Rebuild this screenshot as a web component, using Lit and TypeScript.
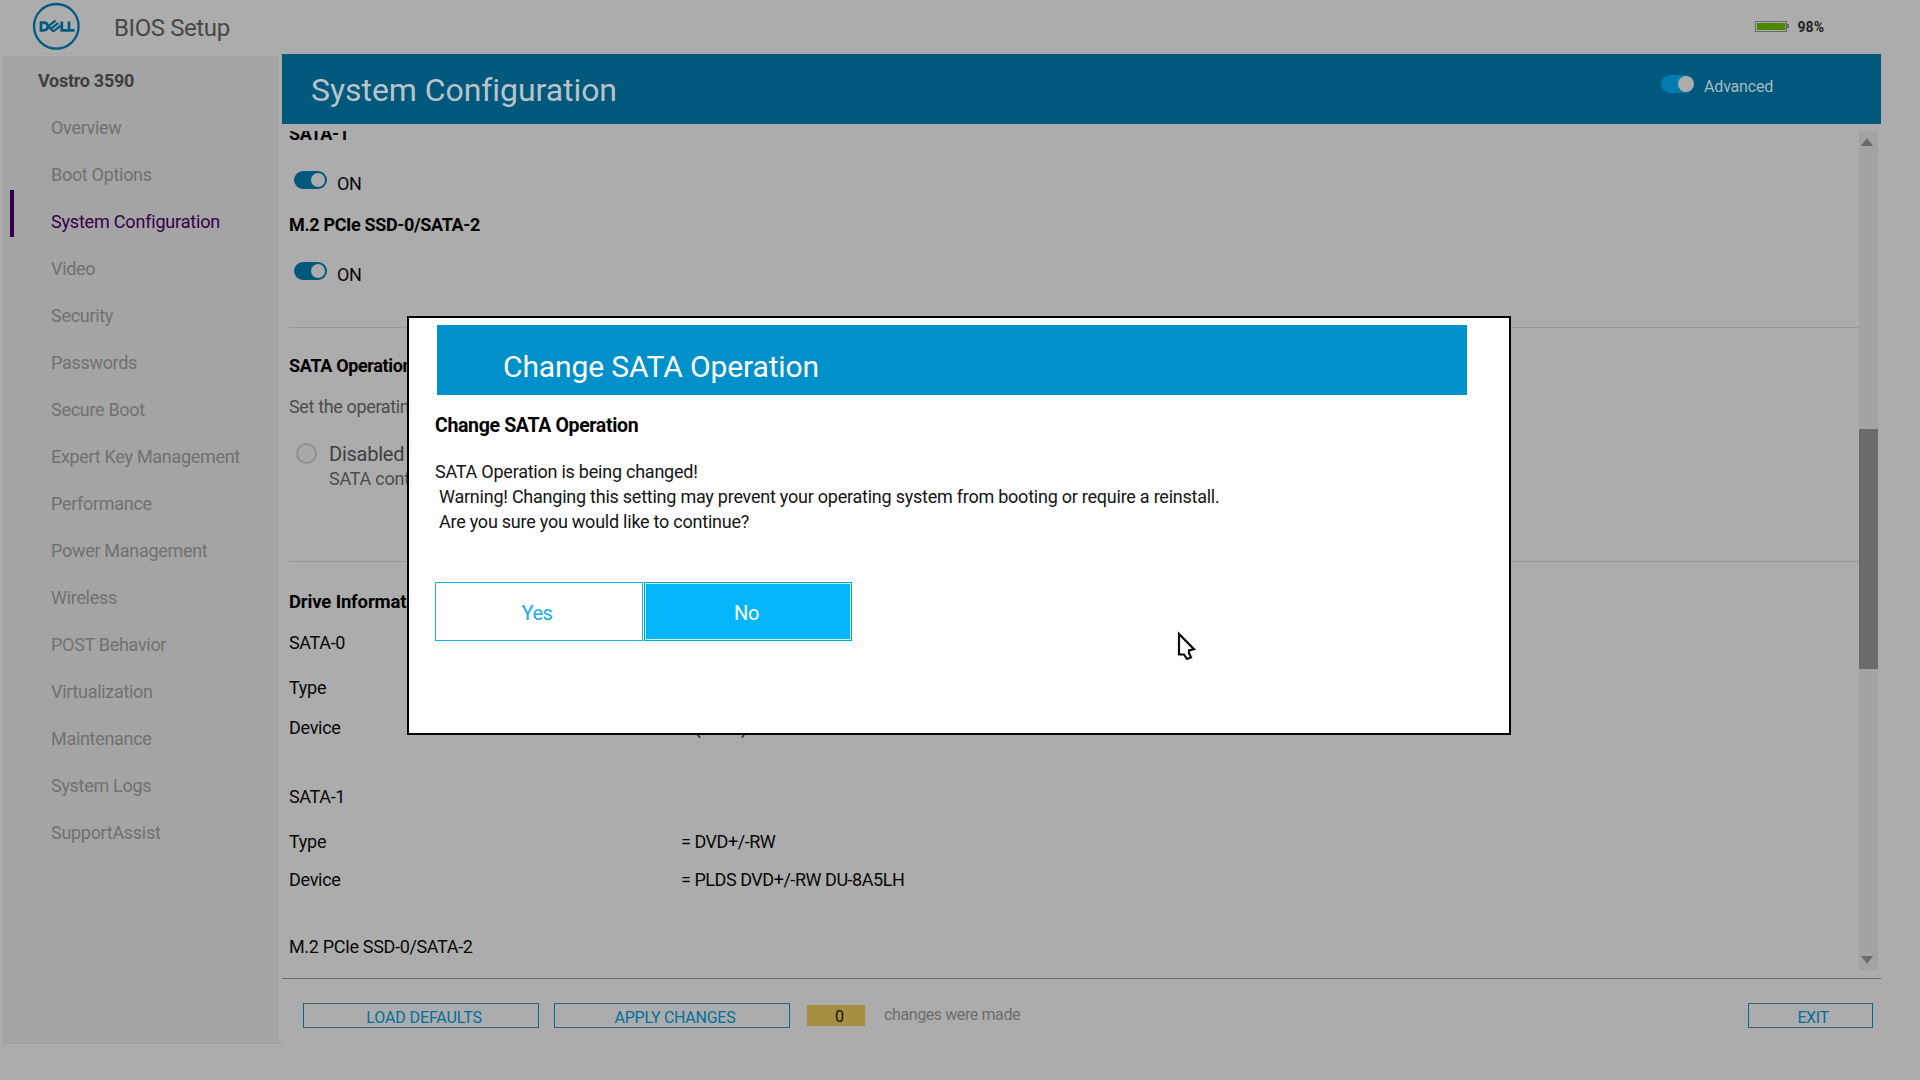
import { LitElement, html, css } from "lit";
import { customElement, property } from "lit/decorators.js";
import { classMap } from "lit/directives/class-map.js";

const NAV = [
  "Overview",
  "Boot Options",
  "System Configuration",
  "Video",
  "Security",
  "Passwords",
  "Secure Boot",
  "Expert Key Management",
  "Performance",
  "Power Management",
  "Wireless",
  "POST Behavior",
  "Virtualization",
  "Maintenance",
  "System Logs",
  "SupportAssist",
];

@customElement("bios-toggle")
export class BiosToggle extends LitElement {
  static styles = css`
    :host { display: flex; }
    .track {
      display: flex;
      justify-content: flex-end;
      align-items: center;
      box-sizing: border-box;
      width: 33px;
      height: 18px;
      border-radius: 9px;
      padding-right: 2px;
      background: #00587c;
    }
    .knob { width: 14px; height: 14px; border-radius: 50%; background: #acacac; }
    .light { background: #007cae; padding-right: 0; }
    .light .knob { width: 16px; height: 16px; }
  `;
  @property() tone = "dark";
  render() {
    return html`<div class=${classMap({ track: true, light: this.tone === "light" })}>
      <div class="knob"></div>
    </div>`;
  }
}

@customElement("bios-header")
export class BiosHeader extends LitElement {
  static styles = css`
    :host {
      display: flex;
      align-items: flex-start;
      height: 54px;
      box-sizing: border-box;
      padding: 2px 0 0 32px;
    }
    .logo { width: 48px; height: 48px; }
    .title { margin-left: 34px; margin-top: 10px; font-size: 24px; line-height: 32px; letter-spacing: -0.4px; color: #474747; }
    .battery { display: flex; align-items: center; margin-left: auto; margin-top: 16px; padding-right: 96px; }
    .battery svg { width: 34px; height: 11px; margin-top: -1px; }
    .percent { margin-left: 9px; font-size: 14px; line-height: 18px; font-weight: 700; color: #222; }
  `;
  render() {
    return html`
      <svg class="logo" viewBox="0 0 48 48" role="img" aria-label="Dell">
        <circle cx="24.3" cy="24.3" r="22.3" fill="none" stroke="#005b80" stroke-width="2.3" />
        <g fill="none" stroke="#005b80" stroke-width="2.7">
          <path d="M9 20.7V28.3H11.4C14.2 28.3 15.7 26.7 15.7 24.5S14.2 20.7 11.4 20.7Z" />
          <path d="M29.8 19.5V28.3H35.6M37 19.5V28.3H42.6" />
          <g stroke-width="2.2">
            <path d="M16 24.4L23.6 18.6M18.6 26.9L26.2 21.1M21.2 29.5L28.8 23.7" />
            <path d="M16 24L21.6 29.6" />
          </g>
        </g>
      </svg>
      <div class="title">BIOS Setup</div>
      <div class="battery">
        <svg viewBox="0 0 34 11">
          <rect x="0.5" y="0.5" width="31" height="10" fill="none" stroke="#696969" />
          <rect x="2" y="2" width="28.5" height="7" fill="#4c8700" />
          <rect x="32" y="3" width="2" height="4" fill="#696969" />
        </svg>
        <div class="percent">98%</div>
      </div>
    `;
  }
}

@customElement("bios-nav")
export class BiosNav extends LitElement {
  static styles = css`
    :host {
      display: block;
      box-sizing: border-box;
      width: 277px;
      height: 988px;
      margin: 2px 0 0 2px;
      background: #a4a4a4;
      box-shadow: 0 0 0 2px #adadad, 0 0 0 3px #a7a7a7;
    }
    .model { padding: 13px 0 0 36px; font-size: 18px; line-height: 24px; font-weight: 700; letter-spacing: -0.28px; color: #3f3f3f; }
    .items { display: flex; flex-direction: column; margin-top: 3px; padding-left: 8px; }
    .item {
      display: flex;
      height: 47px;
      box-sizing: border-box;
      padding: 20px 0 0 37px;
      border-left: 4px solid transparent;
      font-size: 18px;
      line-height: 24px;
      letter-spacing: -0.3px;
      white-space: nowrap;
      color: #717171;
    }
    .active { border-left-color: #34004a; color: #34004a; letter-spacing: -0.19px; }
  `;
  render() {
    return html`
      <div class="model">Vostro 3590</div>
      <div class="items">
        ${NAV.map((n) => html`<div class=${classMap({ item: true, active: n === "System Configuration" })}>${n}</div>`)}
      </div>
    `;
  }
}

@customElement("bios-settings")
export class BiosSettings extends LitElement {
  static styles = css`
    :host { display: flex; height: 839px; padding-top: 7px; }
    .view { width: 1577px; height: 839px; overflow: hidden; box-sizing: border-box; padding-left: 7px; color: #080808; }
    .view > div { font-size: 18px; line-height: 24px; letter-spacing: -0.35px; white-space: nowrap; }
    .view > .head { font-weight: 700; color: #000; }
    .first { margin-top: -9px; }
    .second { margin-top: 17px; }
    .switch { display: flex; height: 25px; margin-top: 25px; padding-left: 5px; gap: 10px; }
    .switch span { margin-top: 1px; }
    .rule { height: 1px; background: #989898; }
    .rule-a { margin-top: 40px; }
    .rule-b { margin-top: 70px; }
    .operation { margin-top: 26px; }
    .note { margin-top: 17px; color: #4c4c4c; }
    .radio { display: flex; gap: 12px; margin-top: 23px; padding-left: 7px; color: #4c4c4c; }
    .ring {
      box-sizing: border-box;
      width: 21px;
      height: 21px;
      margin-top: 1px;
      border: 2px solid #929292;
      border-radius: 50%;
      background: #a9a9a9;
    }
    .choice { font-size: 20px; letter-spacing: -0.25px; color: #404040; }
    .hint { margin-top: 1px; letter-spacing: -0.25px; }
    .view > .drives { margin-top: 28px; font-size: 18.5px; letter-spacing: -0.15px; }
    .drive-a { margin-top: 17px; }
    .drive-b { margin-top: 45px; }
    .drive-c { margin-top: 43px; }
    .pair { display: grid; grid-template-columns: 392px auto; justify-content: start; }
    .type-a { margin-top: 21px; }
    .device-a { margin-top: 16px; }
    .device-b { margin-top: 14px; }
    .view > .pair { letter-spacing: -0.28px; }
    .val { letter-spacing: -0.46px; }
    .bar { display: flex; flex-direction: column; align-items: center; width: 19px; height: 839px; background: #a3a3a3; }
    .arrow { width: 0; height: 0; margin-right: 3px; border: 6px solid transparent; }
    .up { border-top: 0; border-bottom: 8px solid #6b6b6b; margin-top: 7px; }
    .down { border-bottom: 0; border-top: 8px solid #6b6b6b; margin-top: auto; margin-bottom: 6px; }
    .thumb { width: 19px; height: 240px; margin-top: 283px; background: #6b6b6b; }
  `;
  render() {
    return html`
      <div class="view">
        <div class="head first">SATA-1</div>
        <div class="switch"><bios-toggle></bios-toggle><span>ON</span></div>
        <div class="head second">M.2 PCIe SSD-0/SATA-2</div>
        <div class="switch"><bios-toggle></bios-toggle><span>ON</span></div>
        <div class="rule rule-a"></div>
        <div class="head operation">SATA Operation</div>
        <div class="note">Set the operating</div>
        <div class="radio">
          <div class="ring"></div>
          <div>
            <div class="choice">Disabled</div>
            <div class="hint">SATA contr</div>
          </div>
        </div>
        <div class="rule rule-b"></div>
        <div class="head drives">Drive Information</div>
        <div class="drive-a">SATA-0</div>
        <div class="pair type-a"><span>Type</span></div>
        <div class="pair device-a"><span>Device</span><span class="val">= (None)</span></div>
        <div class="drive-b">SATA-1</div>
        <div class="pair type-a"><span>Type</span><span class="val">= DVD+/-RW</span></div>
        <div class="pair device-b"><span>Device</span><span class="val">= PLDS DVD+/-RW DU-8A5LH</span></div>
        <div class="drive-c">M.2 PCIe SSD-0/SATA-2</div>
      </div>
      <div class="bar">
        <div class="arrow up"></div>
        <div class="thumb"></div>
        <div class="arrow down"></div>
      </div>
    `;
  }
}

@customElement("bios-footer")
export class BiosFooter extends LitElement {
  static styles = css`
    :host {
      display: flex;
      box-sizing: border-box;
      height: 102px;
      margin-top: 8px;
      padding: 24px 8px 0 21px;
      border-top: 1px solid #6a6a6a;
      font-size: 16px;
      line-height: 24px;
      letter-spacing: -0.15px;
    }
    .btn {
      display: flex;
      justify-content: center;
      box-sizing: border-box;
      width: 236px;
      height: 25px;
      margin-right: 15px;
      padding: 2px 0 0 6px;
      border: 1px solid #44606c;
      border-left-color: #006a94;
      border-right-color: #006a94;
      color: #006f9c;
    }
    .apply { letter-spacing: -0.27px; margin-right: 17px; }
    .load { letter-spacing: -0.1px; }
    .exit { width: 125px; margin: 0 0 0 auto; padding-left: 5px; letter-spacing: -0.4px; }
    .count { display: flex; justify-content: center; width: 58px; height: 21px; margin-top: 2px; padding-left: 7px; box-sizing: border-box; line-height: 23px; background: #a88e41; color: #111; }
    .made { margin: 0 0 0 19px; letter-spacing: -0.4px; color: #6d6d6d; }
  `;
  render() {
    return html`
      <div class="btn load">LOAD DEFAULTS</div>
      <div class="btn apply">APPLY CHANGES</div>
      <div class="count">0</div>
      <div class="made">changes were made</div>
      <div class="btn exit">EXIT</div>
    `;
  }
}

@customElement("bios-dialog")
export class BiosDialog extends LitElement {
  static styles = css`
    :host {
      display: block;
      box-sizing: border-box;
      width: 1104px;
      height: 419px;
      padding: 7px 26px 0;
      border: 2px solid #000;
      background: #fff;
      color: #141414;
    }
    .banner { width: 1030px; height: 70px; box-sizing: border-box; margin-left: 2px; padding: 22px 0 0 66px; background: #0090ca; color: #fff; font-size: 30px; line-height: 40px; letter-spacing: -0.12px; }
    .sub { margin-top: 18px; font-size: 19.5px; line-height: 26px; font-weight: 700; letter-spacing: -0.34px; color: #000; }
    .text { margin-top: 20px; font-size: 18px; line-height: 25px; letter-spacing: -0.24px; white-space: nowrap; }
    .text div + div { padding-left: 4px; }
    .buttons { display: flex; gap: 1px; margin-top: 48px; }
    .btn {
      display: flex;
      justify-content: center;
      box-sizing: border-box;
      width: 208px;
      height: 59px;
      padding: 17px 4px 0 0;
      border: 1px solid #0fb4f0;
      font-size: 20px;
      line-height: 26px;
      letter-spacing: -0.4px;
      color: #15aee6;
    }
    .primary { padding-right: 3px; border-color: #00a9c4; background: #04b5fa; box-shadow: inset 0 0 0 1px #c9fbff; color: #fff; }
  `;
  render() {
    return html`
      <div class="banner">Change SATA Operation</div>
      <div class="sub">Change SATA Operation</div>
      <div class="text">
        <div>SATA Operation is being changed!</div>
        <div>Warning! Changing this setting may prevent your operating system from booting or require a reinstall.</div>
        <div>Are you sure you would like to continue?</div>
      </div>
      <div class="buttons">
        <div class="btn">Yes</div>
        <div class="btn primary">No</div>
      </div>
    `;
  }
}

@customElement("app-root")
export class AppRoot extends LitElement {
  static styles = css`
    :host {
      display: block;
      position: relative;
      width: 1920px;
      height: 1080px;
      overflow: hidden;
      background: #acacac;
      font-family: Roboto, "Liberation Sans", sans-serif;
    }
    .body { display: flex; gap: 3px; }
    .main { width: 1599px; }
    .banner { display: flex; height: 70px; box-sizing: border-box; padding: 0 108px 0 29px; background: #00587c; color: #b9c3c8; }
    .title { margin-top: 16px; font-size: 32px; line-height: 40px; letter-spacing: -0.06px; }
    .advanced { display: flex; gap: 10px; margin: 21px 0 0 auto; font-size: 16px; line-height: 24px; letter-spacing: -0.2px; color: #a7bac3; }
    bios-dialog { position: absolute; left: 407px; top: 316px; }
    .cursor { position: absolute; left: 1177px; top: 631px; width: 20px; height: 30px; }
  `;
  render() {
    return html`
      <bios-header></bios-header>
      <div class="body">
        <bios-nav></bios-nav>
        <div class="main">
          <div class="banner">
            <div class="title">System Configuration</div>
            <div class="advanced"><bios-toggle tone="light"></bios-toggle><span>Advanced</span></div>
          </div>
          <bios-settings></bios-settings>
          <bios-footer></bios-footer>
        </div>
      </div>
      <bios-dialog></bios-dialog>
      <svg class="cursor" viewBox="0 0 20 30">
        <path d="M2 3V23.5H7L10 28L14 26.4L12 22V19.4L17 18.2Z" fill="#fff" stroke="#0c0c0c" stroke-width="2.2" />
      </svg>
    `;
  }
}
